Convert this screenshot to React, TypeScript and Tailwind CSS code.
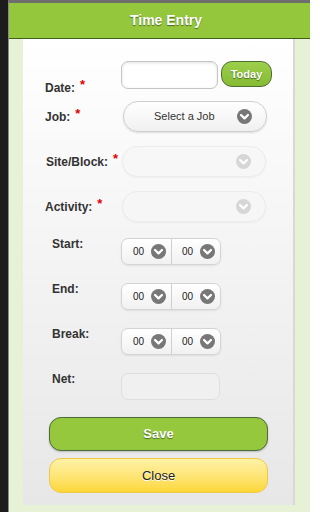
import React from "react";

const Chevron = ({ faded = false }: { faded?: boolean }) => (
  <svg width="15" height="15" viewBox="0 0 16 16" className="shrink-0">
    <circle cx="8" cy="8" r="8" fill={faded ? "#d6d6d6" : "#777777"} />
    <path d="M4.3 6.4 L8 10 L11.7 6.4" fill="none" stroke="#ffffff" strokeWidth="2.4" strokeLinecap="round" strokeLinejoin="round" />
  </svg>
);

const Star = () => <span className="ml-[5px] relative -top-[3px] text-[13px] text-[#e00000]">*</span>;

const TimePair = () => (
  <div className="flex h-[27px] w-[100px] rounded-[7px] border border-[#d4d4d4] bg-gradient-to-b from-[#ffffff] to-[#f1f1f1] shadow-[0_1px_2px_rgba(0,0,0,0.08)]">
    <div className="flex flex-1 items-center justify-between pl-[11px] pr-[5px] border-r border-[#cfcfcf]">
      <span className="text-[10px] text-[#222]">00</span>
      <Chevron />
    </div>
    <div className="flex flex-1 items-center justify-between pl-[10px] pr-[5px]">
      <span className="text-[10px] text-[#222]">00</span>
      <Chevron />
    </div>
  </div>
);

const App = () => {
  return (
    <div className="flex h-[512px] w-[310px] overflow-hidden bg-[#1c1c1c] font-['Liberation_Sans',Arial,sans-serif]">

      <div className="w-[8px] shrink-0" />

      <div className="flex flex-1 flex-col border-t-[3px] border-l border-t-[#6e6e6e] border-l-[#8a8a8a]">

        <div className="flex h-[36px] shrink-0 items-center justify-center border-b border-[#3c5f1c] bg-[#95c73c] pl-[13px]">
          <h1 className="text-[14px] font-bold text-white [text-shadow:0_1px_1px_#4a6a22]">Time Entry</h1>
        </div>

        <div className="flex flex-1 flex-col bg-[#e6f1d5] pl-[14px] pr-[15px] pb-[7px]">

          <div className="flex flex-1 flex-col border-r-2 border-[#d8d8d8] bg-gradient-to-b from-[#ffffff] to-[#e7e7e7] text-[12px] text-[#333]">

            <div className="mt-[22px] flex h-[28px] items-start">
              <div className="w-[98px] shrink-0 pl-[22px] pt-[17px] font-bold">Date:<Star /></div>
              <div className="h-[28px] w-[97px] rounded-[7px] border border-[#c4c4c4] bg-white shadow-[inset_0_1px_3px_rgba(0,0,0,0.12)]" />
              <button className="ml-[3px] h-[26px] w-[51px] rounded-[11px] border border-[#4f6e33] bg-gradient-to-b from-[#9dd04a] to-[#86bb34] text-[11px] font-bold text-white [text-shadow:0_1px_1px_#4a6a22]">
                Today
              </button>
            </div>

            <div className="mt-[12px] flex h-[31px] items-center">
              <div className="w-[100px] shrink-0 pl-[22px] font-bold">Job:<Star /></div>
              <div className="flex h-[31px] w-[144px] items-center rounded-[15px] border border-[#cfcfcf] bg-gradient-to-b from-[#ffffff] to-[#f0f0f0] pl-[30px] pr-[14px] shadow-[0_1px_2px_rgba(0,0,0,0.12)]">
                <span className="flex-1 text-[11px] text-[#333]">Select a Job</span>
                <Chevron />
              </div>
            </div>

            <div className="mt-[14px] flex h-[31px] items-center">
              <div className="w-[99px] shrink-0 pl-[23px] font-bold">Site/Block:<Star /></div>
              <div className="flex h-[31px] w-[144px] items-center justify-end rounded-[15px] border border-[#ececec] bg-[#f7f7f7] pr-[14px] shadow-[0_1px_2px_rgba(0,0,0,0.04)]">
                <Chevron faded />
              </div>
            </div>

            <div className="mt-[14px] flex h-[31px] items-center">
              <div className="w-[99px] shrink-0 pl-[22px] font-bold">Activity:<Star /></div>
              <div className="flex h-[31px] w-[144px] items-center justify-end rounded-[15px] border border-[#ececec] bg-[#f6f6f6] pr-[14px] shadow-[0_1px_2px_rgba(0,0,0,0.04)]">
                <Chevron faded />
              </div>
            </div>

            <div className="mt-[16px] flex h-[27px] items-start">
              <div className="-mt-[3px] w-[98px] shrink-0 pl-[29px] font-bold">Start:</div>
              <TimePair />
            </div>

            <div className="mt-[18px] flex h-[27px] items-start">
              <div className="-mt-[3px] w-[98px] shrink-0 pl-[29px] font-bold">End:</div>
              <TimePair />
            </div>

            <div className="mt-[18px] flex h-[27px] items-start">
              <div className="-mt-[3px] w-[98px] shrink-0 pl-[29px] font-bold">Break:</div>
              <TimePair />
            </div>

            <div className="mt-[18px] flex h-[27px] items-start">
              <div className="-mt-[3px] w-[98px] shrink-0 pl-[29px] font-bold">Net:</div>
              <div className="h-[27px] w-[99px] rounded-[7px] border border-[#dedede] bg-[#f0f0f0]" />
            </div>

            <button className="ml-[26px] mt-[17px] h-[34px] w-[219px] rounded-[12px] border border-[#4d6a3b] bg-[#95c83d] text-[13px] font-bold text-white [text-shadow:0_1px_1px_#4a6a22] shadow-[0_1px_2px_rgba(0,0,0,0.2)]">
              Save
            </button>

            <button className="ml-[26px] mt-[7px] h-[35px] w-[219px] rounded-[12px] border border-[#efc84a] bg-gradient-to-b from-[#fff2a6] to-[#fdd834] text-[13px] text-[#222] [text-shadow:0_1px_0_#ffffff]">
              Close
            </button>

          </div>

        </div>

      </div>

    </div>
  );
};

export default App;
